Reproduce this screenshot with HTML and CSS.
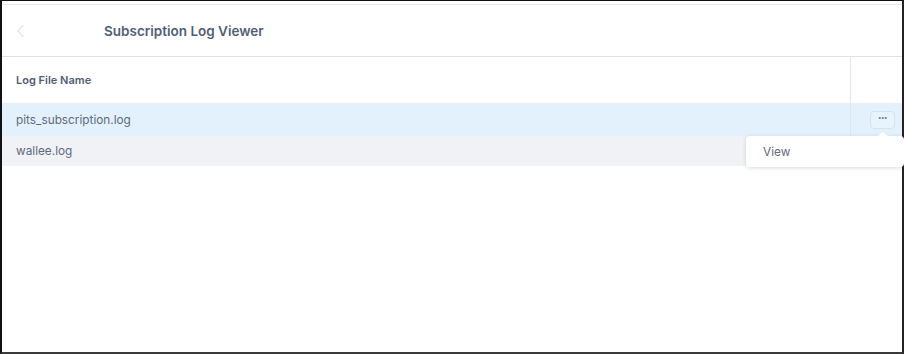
FILE: index.html
```html
<!DOCTYPE html>
<html lang="en">
<head>
  <meta charset="UTF-8">
  <meta name="viewport" content="width=device-width, initial-scale=1.0">
  <title>Subscription Log Viewer</title>
  <link rel="stylesheet" href="styles.css">
</head>
<body>
  <div class="frame">
    <div class="header">
      <button type="button" class="back">
        <svg width="10" height="16" viewBox="0 0 10 16"><path d="M7.5 2 L2 8 L7.5 14" fill="none" stroke="#d6dbe3" stroke-width="1.1"/></svg>
      </button>
      <h1>Subscription Log Viewer</h1>
    </div>

    <div class="log-table">
      <div class="cell head">Log File Name</div>
      <div class="cell head actions"></div>

      <div class="cell row selected">pits_subscription.log</div>
      <div class="cell row selected actions">
        <button type="button" class="more">&middot;&middot;&middot;</button>
        <div class="menu">
          <div class="menu-item">View</div>
        </div>
      </div>

      <div class="cell row alt">wallee.log</div>
      <div class="cell row alt actions"></div>
    </div>
  </div>
</body>
</html>
```

FILE: styles.css
```css
html, body {
  margin: 0;
  height: 100%;
}

body {
  font-family: Inter, 'Noto Sans', sans-serif;
  background-color: #fff;
  color: #5f6a7b;
}

.frame {
  box-sizing: border-box;
  height: 100%;
  border-top: 1px solid #111;
  border-left: 2px solid #111;
  border-right: 2px solid #222;
  border-bottom: 2px solid #3a3a3a;
  padding-top: 3px;
}

.header {
  display: flex;
  align-items: center;
  height: 51px;
  border-top: 1px solid #e6eaf0;
  border-bottom: 1px solid #dde2ea;
}

.back {
  background: none;
  border: none;
  padding: 0;
  margin-left: 14px;
  width: 12px;
  display: flex;
  align-items: center;
}

h1 {
  margin: 0 0 0 76px;
  font-size: 13.5px;
  font-weight: 600;
  color: #505e76;
}

.log-table {
  display: grid;
  grid-template-columns: 1fr 52px;
}

.cell {
  display: flex;
  align-items: center;
  font-size: 11.8px;
  padding-left: 14px;
}

.cell.actions {
  padding-left: 0;
  border-left: 1px solid #e2e6ec;
  position: relative;
  justify-content: flex-end;
  padding-right: 7px;
}

.head {
  height: 46px;
  font-size: 11px;
  font-weight: 600;
  color: #505e76;
}

.row {
  height: 33px;
}

.selected {
  background-color: #e3f1fd;
  border-top: 1px solid #e9eef5;
  box-sizing: border-box;
}

.alt {
  height: 30px;
  background-color: #f1f2f5;
}

.alt.actions {
  border-left: none;
}

.more {
  width: 25px;
  height: 18px;
  border: 1px solid #d5e3f1;
  border-radius: 4px;
  background-color: #e8f3fd;
  color: #7a8292;
  font-size: 12px;
  font-weight: 700;
  line-height: 10px;
  padding: 0 0 4px;
  letter-spacing: -1px;
}

.menu {
  position: absolute;
  top: 100%;
  right: -2px;
  width: 158px;
  background-color: #fff;
  border-radius: 4px;
  box-shadow: 0 1px 4px rgba(40, 50, 70, 0.18);
  z-index: 2;
}

.menu::before {
  content: '';
  position: absolute;
  top: -4px;
  right: 16px;
  border-left: 5px solid transparent;
  border-right: 5px solid transparent;
  border-bottom: 4px solid #fff;
}

.menu-item {
  height: 31px;
  display: flex;
  align-items: center;
  padding-left: 17px;
  font-size: 11.8px;
  color: #5f6a7b;
}
```
